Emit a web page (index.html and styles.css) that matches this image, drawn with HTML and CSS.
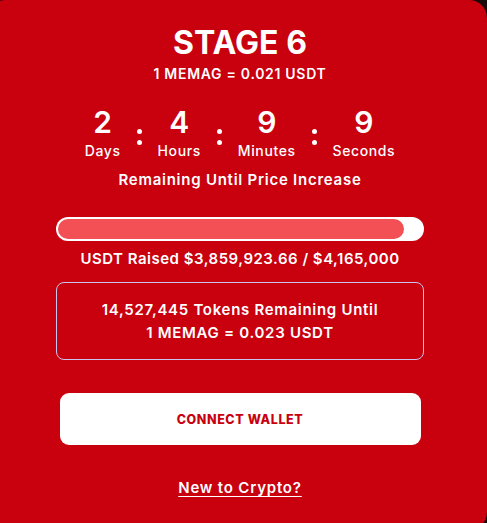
FILE: index.html
```html
<!DOCTYPE html>
<html>
<head>
<meta charset="utf-8">
<link rel="stylesheet" href="styles.css">
</head>
<body>
<div class="card">
  <div class="content">
    <h1 class="stage">STAGE 6</h1>
    <p class="price">1 MEMAG = 0.021 USDT</p>
    <div class="countdown">
      <div class="unit"><span class="num">2</span><span class="lbl">Days</span></div>
      <div class="colon"><i></i><i></i></div>
      <div class="unit"><span class="num">4</span><span class="lbl">Hours</span></div>
      <div class="colon"><i></i><i></i></div>
      <div class="unit"><span class="num">9</span><span class="lbl">Minutes</span></div>
      <div class="colon"><i></i><i></i></div>
      <div class="unit"><span class="num">9</span><span class="lbl">Seconds</span></div>
    </div>
    <p class="remaining">Remaining Until Price Increase</p>
    <div class="progress"><div class="fill" style="width: 95%"></div></div>
    <p class="raised">USDT Raised $3,859,923.66 / $4,165,000</p>
    <div class="tokens">14,527,445 Tokens Remaining Until<br>1 MEMAG = 0.023 USDT</div>
    <button class="connect">CONNECT WALLET</button>
    <a class="newto" href="#">New to Crypto?</a>
  </div>
</div>
</body>
</html>
```
FILE: styles.css
```css
html, body {
  margin: 0;
  padding: 0;
  background: #1a0a0b;
}
body {
  font-family: Inter, "Open Sans", sans-serif;
  color: #fff;
  overflow: hidden;
}
.card {
  background: #c9000e;
  width: 500px;
  height: 530px;
  margin-left: -13px;
  border-radius: 18px;
  box-sizing: border-box;
  padding-left: 69px;
}
.content {
  width: 368px;
  display: flex;
  flex-direction: column;
  align-items: center;
  padding-top: 26px;
}
.stage {
  margin: 0;
  font-size: 32px;
  line-height: 34px;
  font-weight: 700;
}
.price {
  margin: 5px 0 0;
  font-size: 14px;
  line-height: 18px;
  font-weight: 600;
  letter-spacing: 0.7px;
}
.countdown {
  display: flex;
  align-items: center;
  gap: 16px;
  margin-top: 22px;
}
.unit {
  display: flex;
  flex-direction: column;
  align-items: center;
}
.num {
  font-size: 30px;
  line-height: 34px;
  font-weight: 600;
}
.lbl {
  font-size: 14px;
  line-height: 18px;
  font-weight: 500;
  letter-spacing: 0.6px;
  margin-top: 3px;
}
.colon {
  display: flex;
  flex-direction: column;
  gap: 6px;
  padding-top: 8px;
}
.colon i {
  display: block;
  width: 5px;
  height: 5px;
  border-radius: 50%;
  background: #fff;
}
.remaining {
  margin: 10px 0 0;
  font-size: 15px;
  line-height: 20px;
  font-weight: 600;
  letter-spacing: 0.75px;
}
.progress {
  margin-top: 27px;
  width: 368px;
  height: 24px;
  box-sizing: border-box;
  background: #fff;
  border-radius: 12px;
  padding: 2px;
}
.fill {
  height: 100%;
  background: #f25055;
  border-radius: 10px;
}
.raised {
  margin: 8px 0 0;
  font-size: 15px;
  line-height: 20px;
  font-weight: 600;
  letter-spacing: 0.5px;
}
.tokens {
  margin-top: 13px;
  width: 368px;
  height: 78px;
  box-sizing: border-box;
  border: 1px solid #c9c6ee;
  border-radius: 8px;
  display: flex;
  align-items: center;
  justify-content: center;
  text-align: center;
  font-size: 15px;
  line-height: 23px;
  font-weight: 600;
  letter-spacing: 0.7px;
}
.connect {
  margin-top: 33px;
  width: 361px;
  height: 52px;
  background: #fff;
  border: 0;
  border-radius: 9px;
  color: #c9000e;
  font-family: Inter, sans-serif;
  font-size: 12.5px;
  font-weight: 800;
  letter-spacing: 0.6px;
}
.newto {
  margin-top: 33px;
  color: #fff;
  font-size: 15px;
  line-height: 20px;
  font-weight: 600;
  letter-spacing: 0.8px;
  text-decoration: underline;
  text-underline-offset: 3px;
}
```
